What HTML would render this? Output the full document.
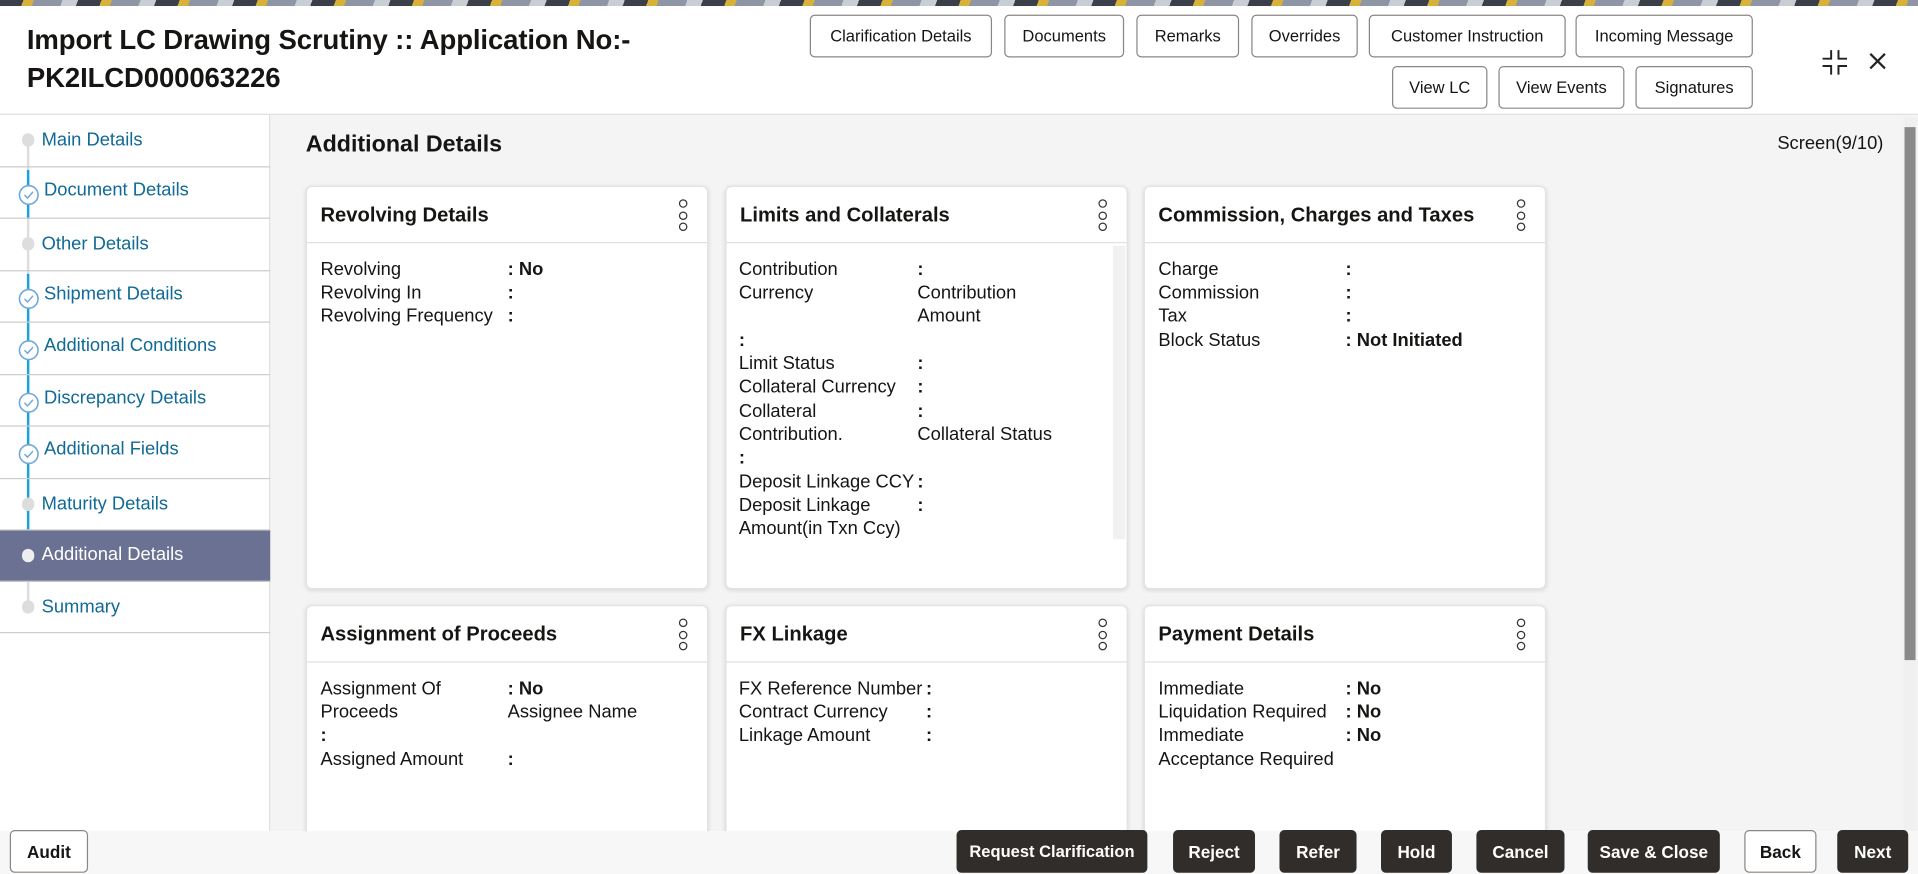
<!DOCTYPE html>
<html><head><meta charset="utf-8"><style>
*{box-sizing:border-box;margin:0;padding:0}
html,body{width:1918px;height:874px;overflow:hidden;background:#fff;font-family:"Liberation Sans",sans-serif;color:#161513}
#w{position:absolute;left:0;top:0;width:1568px;height:715px;transform:scale(1.22321,1.2224);transform-origin:0 0;overflow:hidden}
.abs{position:absolute}
.topstrip{left:0;top:0;width:1568px;height:5px;background:repeating-linear-gradient(110deg,#3a3f4a 0 18px,#d8b13a 18px 26px,#8e96a6 26px 48px,#c9cdd4 48px 60px)}
.hdr{left:0;top:5px;width:1568px;height:89px;background:#fff;border-bottom:1px solid #ddd}
.title{left:22px;top:17px;font-size:22.5px;font-weight:bold;line-height:31px;letter-spacing:-0.1px}
.btn{position:absolute;height:35px;border:1px solid #8a8683;border-radius:4px;background:#fff;font-size:13.5px;display:flex;align-items:center;justify-content:center;color:#161513}
.side{left:0;top:94px;width:221px;height:586px;background:#fff;border-right:1px solid #ddd}
.it{position:absolute;left:0;width:221px;border-bottom:1px solid #cfccc9;font-size:15px;color:#0f6a96}
.it span{position:absolute;left:34px}
.dot{position:absolute;left:18px;width:10px;height:11px;border-radius:5px;background:#ddd}
.chk{position:absolute;left:15px;width:17px;height:17px}
.vl{position:absolute;left:22px;width:2px}
.main{left:221px;top:94px;width:1347px;height:586px;background:#f4f4f4}
.card{position:absolute;width:329px;background:#fff;border:1px solid #e3e3e3;border-radius:5px;box-shadow:0 1px 4px rgba(0,0,0,.12)}
.ch{height:46px;border-bottom:1px solid #e0e0e0;position:relative}
.ch b{position:absolute;left:11px;top:14px;font-size:16.5px;font-weight:bold}
.keb{position:absolute;right:16px;top:10px;width:7px}
.keb i{display:block;width:7px;height:7px;border:1.5px solid #333;border-radius:50%;margin-bottom:2.5px}
.cb{position:relative;font-size:15px;line-height:19.4px}
.cb div{position:absolute;white-space:nowrap}
.fbtn{position:absolute;top:679px;height:35px;border-radius:4px;background:#312d2a;color:#fff;font-size:14px;font-weight:bold;display:flex;align-items:center;justify-content:center}
</style></head><body><div id="w">
<div class="abs topstrip"></div>
<div class="abs hdr"></div>
<div class="abs title">Import LC Drawing Scrutiny :: Application No:-<br>PK2ILCD000063226</div>
<div class="btn" style="left:662px;top:12px;width:149px">Clarification Details</div>
<div class="btn" style="left:821px;top:12px;width:98px">Documents</div>
<div class="btn" style="left:929px;top:12px;width:84px">Remarks</div>
<div class="btn" style="left:1023px;top:12px;width:87px">Overrides</div>
<div class="btn" style="left:1119px;top:12px;width:161px">Customer Instruction</div>
<div class="btn" style="left:1288px;top:12px;width:145px">Incoming Message</div>
<div class="btn" style="left:1138px;top:54px;width:78px">View LC</div>
<div class="btn" style="left:1225px;top:54px;width:103px">View Events</div>
<div class="btn" style="left:1337px;top:54px;width:96px">Signatures</div>
<svg class="abs" style="left:1489px;top:40px" width="22" height="22" viewBox="0 0 22 22" fill="none" stroke="#222" stroke-width="1.6"><path d="M8 1v7H1M14 1v7h7M8 21v-7H1M14 21v-7h7"/></svg>
<svg class="abs" style="left:1528px;top:43px" width="14" height="14" viewBox="0 0 14 14" stroke="#222" stroke-width="1.8"><path d="M1 1l12 12M13 1L1 13"/></svg>

<div class="abs side">
<div class="vl" style="top:20px;height:380px;background:#ddd"></div>
<div class="vl" style="top:45px;height:40px;background:#1aa3d9"></div>
<div class="vl" style="top:130px;height:210px;background:#1aa3d9"></div>
<div class="it" style="top:0;height:43px"><div class="dot" style="top:15px"></div><span style="top:12px">Main Details</span></div>
<div class="it" style="top:43px;height:42px"><svg class="chk" style="top:14px" viewBox="0 0 17 17"><circle cx="8.5" cy="8.5" r="7.6" fill="#fff" stroke="#6fa8dc" stroke-width="1.3"/><path d="M5 8.5l2.5 2.5 4.5-5" fill="none" stroke="#6fa8dc" stroke-width="1.2"/></svg><span style="top:10px;left:36px">Document Details</span></div>
<div class="it" style="top:85px;height:43px"><div class="dot" style="top:15px"></div><span style="top:12px">Other Details</span></div>
<div class="it" style="top:128px;height:42px"><svg class="chk" style="top:14px" viewBox="0 0 17 17"><circle cx="8.5" cy="8.5" r="7.6" fill="#fff" stroke="#6fa8dc" stroke-width="1.3"/><path d="M5 8.5l2.5 2.5 4.5-5" fill="none" stroke="#6fa8dc" stroke-width="1.2"/></svg><span style="top:10px;left:36px">Shipment Details</span></div>
<div class="it" style="top:170px;height:43px"><svg class="chk" style="top:14px" viewBox="0 0 17 17"><circle cx="8.5" cy="8.5" r="7.6" fill="#fff" stroke="#6fa8dc" stroke-width="1.3"/><path d="M5 8.5l2.5 2.5 4.5-5" fill="none" stroke="#6fa8dc" stroke-width="1.2"/></svg><span style="top:10px;left:36px">Additional Conditions</span></div>
<div class="it" style="top:213px;height:42px"><svg class="chk" style="top:14px" viewBox="0 0 17 17"><circle cx="8.5" cy="8.5" r="7.6" fill="#fff" stroke="#6fa8dc" stroke-width="1.3"/><path d="M5 8.5l2.5 2.5 4.5-5" fill="none" stroke="#6fa8dc" stroke-width="1.2"/></svg><span style="top:10px;left:36px">Discrepancy Details</span></div>
<div class="it" style="top:255px;height:43px"><svg class="chk" style="top:14px" viewBox="0 0 17 17"><circle cx="8.5" cy="8.5" r="7.6" fill="#fff" stroke="#6fa8dc" stroke-width="1.3"/><path d="M5 8.5l2.5 2.5 4.5-5" fill="none" stroke="#6fa8dc" stroke-width="1.2"/></svg><span style="top:10px;left:36px">Additional Fields</span></div>
<div class="it" style="top:298px;height:42px"><div class="dot" style="top:15px"></div><span style="top:12px">Maturity Details</span></div>
<div class="it" style="top:340px;height:42px;background:#6b7192;color:#fff"><div class="dot" style="top:15px;background:#eee"></div><span style="top:11px">Additional Details</span></div>
<div class="it" style="top:382px;height:42px"><div class="dot" style="top:15px"></div><span style="top:12px">Summary</span></div>
</div>
<div class="abs" style="left:225px;top:370px;width:5px;height:90px;background:#ccc;border-radius:2px"></div>

<div class="abs main"></div>
<div class="abs" style="left:250px;top:108px;font-size:19px;font-weight:bold">Additional Details</div>
<div class="abs" style="left:1453px;top:109px;font-size:15px">Screen(9/10)</div>
<div class="abs" style="left:1556px;top:96px;width:11px;height:584px;background:#f0f0f0"></div>
<div class="abs" style="left:1557px;top:104px;width:9px;height:436px;background:#8a8a8a"></div>

<div class="card" style="left:250px;top:152px;height:330px"><div class="ch"><b>Revolving Details</b><div class="keb"><i></i><i></i><i></i></div></div>
<div class="cb"><div style="left:11px;top:12px">Revolving</div><div style="left:164px;top:12px;font-weight:bold">: No</div>
<div style="left:11px;top:31px">Revolving In</div><div style="left:164px;top:31px;font-weight:bold">:</div>
<div style="left:11px;top:50px">Revolving Frequency</div><div style="left:164px;top:50px;font-weight:bold">:</div></div></div>

<div class="card" style="left:593px;top:152px;height:330px"><div class="ch"><b>Limits and Collaterals</b><div class="keb"><i></i><i></i><i></i></div></div>
<div class="cb"><div style="left:10px;top:12px">Contribution</div><div style="left:156px;top:12px;font-weight:bold">:</div>
<div style="left:10px;top:31px">Currency</div><div style="left:156px;top:31px">Contribution</div><div style="left:156px;top:50px">Amount</div>
<div style="left:10px;top:70px;font-weight:bold">:</div>
<div style="left:10px;top:89px">Limit Status</div><div style="left:156px;top:89px;font-weight:bold">:</div>
<div style="left:10px;top:108px">Collateral Currency</div><div style="left:156px;top:108px;font-weight:bold">:</div>
<div style="left:10px;top:128px">Collateral</div><div style="left:156px;top:128px;font-weight:bold">:</div>
<div style="left:10px;top:147px">Contribution.</div><div style="left:156px;top:147px">Collateral Status</div>
<div style="left:10px;top:166px;font-weight:bold">:</div>
<div style="left:10px;top:186px">Deposit Linkage CCY</div><div style="left:156px;top:186px;font-weight:bold">:</div>
<div style="left:10px;top:205px">Deposit Linkage</div><div style="left:156px;top:205px;font-weight:bold">:</div>
<div style="left:10px;top:224px">Amount(in Txn Ccy)</div>
<div style="left:316px;top:2px;width:10px;height:240px;background:#f1f1f1"></div></div></div>

<div class="card" style="left:935px;top:152px;height:330px"><div class="ch"><b>Commission, Charges and Taxes</b><div class="keb"><i></i><i></i><i></i></div></div>
<div class="cb"><div style="left:11px;top:12px">Charge</div><div style="left:164px;top:12px;font-weight:bold">:</div>
<div style="left:11px;top:31px">Commission</div><div style="left:164px;top:31px;font-weight:bold">:</div>
<div style="left:11px;top:50px">Tax</div><div style="left:164px;top:50px;font-weight:bold">:</div>
<div style="left:11px;top:70px">Block Status</div><div style="left:164px;top:70px;font-weight:bold">: Not Initiated</div></div></div>

<div class="card" style="left:250px;top:495px;height:240px"><div class="ch"><b>Assignment of Proceeds</b><div class="keb"><i></i><i></i><i></i></div></div>
<div class="cb"><div style="left:11px;top:12px">Assignment Of</div><div style="left:164px;top:12px;font-weight:bold">: No</div>
<div style="left:11px;top:31px">Proceeds</div><div style="left:164px;top:31px">Assignee Name</div>
<div style="left:11px;top:50px;font-weight:bold">:</div>
<div style="left:11px;top:70px">Assigned Amount</div><div style="left:164px;top:70px;font-weight:bold">:</div></div></div>

<div class="card" style="left:593px;top:495px;height:240px"><div class="ch"><b>FX Linkage</b><div class="keb"><i></i><i></i><i></i></div></div>
<div class="cb"><div style="left:10px;top:12px">FX Reference Number</div><div style="left:163px;top:12px;font-weight:bold">:</div>
<div style="left:10px;top:31px">Contract Currency</div><div style="left:163px;top:31px;font-weight:bold">:</div>
<div style="left:10px;top:50px">Linkage Amount</div><div style="left:163px;top:50px;font-weight:bold">:</div></div></div>

<div class="card" style="left:935px;top:495px;height:240px"><div class="ch"><b>Payment Details</b><div class="keb"><i></i><i></i><i></i></div></div>
<div class="cb"><div style="left:11px;top:12px">Immediate</div><div style="left:164px;top:12px;font-weight:bold">: No</div>
<div style="left:11px;top:31px">Liquidation Required</div><div style="left:164px;top:31px;font-weight:bold">: No</div>
<div style="left:11px;top:50px">Immediate</div><div style="left:164px;top:50px;font-weight:bold">: No</div>
<div style="left:11px;top:70px">Acceptance Required</div></div></div>

<div class="abs" style="left:0;top:680px;width:1568px;height:35px;background:#f7f7f7"></div>
<div class="btn" style="left:8px;top:679px;width:64px;font-size:14px;font-weight:bold;border-color:#8a8683">Audit</div>
<div class="fbtn" style="left:782px;width:156px;font-size:13.5px">Request Clarification</div>
<div class="fbtn" style="left:959px;width:67px">Reject</div>
<div class="fbtn" style="left:1046px;width:63px">Refer</div>
<div class="fbtn" style="left:1129px;width:58px">Hold</div>
<div class="fbtn" style="left:1207px;width:72px">Cancel</div>
<div class="fbtn" style="left:1298px;width:108px">Save &amp; Close</div>
<div class="btn" style="left:1426px;top:679px;width:59px;font-size:14px;font-weight:bold">Back</div>
<div class="fbtn" style="left:1502px;width:58px">Next</div>
</div></body></html>
